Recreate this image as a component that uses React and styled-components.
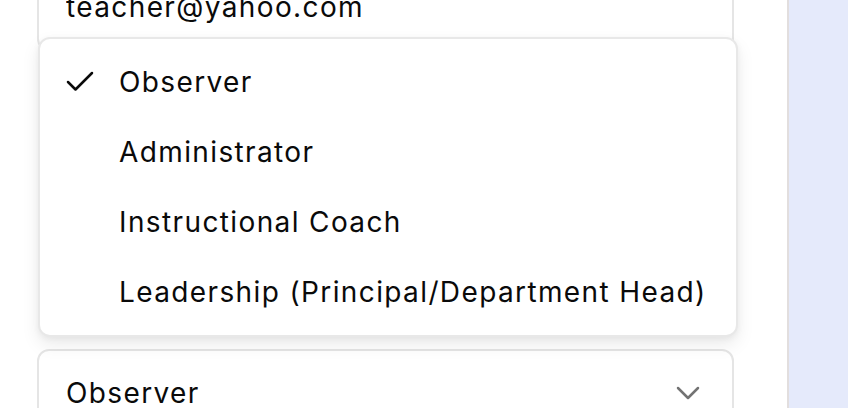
import styled, { createGlobalStyle } from "styled-components";
import { Check, ChevronDown } from "lucide-react";

const GlobalStyle = createGlobalStyle`
  html, body, #root {
    height: 100%;
  }
  body {
    margin: 0;
    overflow: hidden;
    background: #ffffff;
    font-family: Inter, "Noto Sans", sans-serif;
    letter-spacing: 1.38px;
    color: #0a0a0a;
  }
`;

const Page = styled.div`
  display: flex;
  height: 100%;
`;

const Main = styled.main`
  width: 787px;
  flex-shrink: 0;
  padding-left: 37px;
  box-sizing: border-box;
  background: #ffffff;
`;

const Aside = styled.aside`
  flex: 1;
  border-left: 2px solid #e2dede;
  background: #e5eafb;
`;

const Form = styled.form`
  width: 697px;
  display: flex;
  flex-direction: column;
  margin-top: -37px;
`;

const Field = styled.div`
  position: relative;
  margin-top: ${(p) => p.$offset || 0}px;
`;

const Input = styled.input`
  display: block;
  width: 100%;
  height: 88px;
  box-sizing: border-box;
  border: 2px solid #e5e5e5;
  border-radius: 12px;
  padding: 0 27px;
  font: inherit;
  font-size: 28px;
  letter-spacing: inherit;
  color: #0a0a0a;
  background: #ffffff;
  outline: none;
`;

const Trigger = styled.button`
  display: flex;
  align-items: center;
  justify-content: space-between;
  width: 100%;
  height: 88px;
  box-sizing: border-box;
  border: 2px solid #e5e5e5;
  border-radius: 12px;
  padding: 0 24px 0 27px;
  font: inherit;
  font-size: 28px;
  letter-spacing: inherit;
  color: #0a0a0a;
  background: #ffffff;
  text-align: left;

  svg {
    color: #737373;
  }
`;

const Menu = styled.div`
  position: absolute;
  left: 1px;
  right: -4px;
  bottom: calc(100% + 12px);
  box-sizing: border-box;
  padding: 8px 0;
  border: 2px solid #e8e8e8;
  border-radius: 12px;
  background: #ffffff;
  box-shadow: 0 8px 18px rgba(0, 0, 0, 0.08), 0 2px 6px rgba(0, 0, 0, 0.05);
`;

const Item = styled.div`
  display: flex;
  align-items: center;
  height: 70px;
  padding-left: 79px;
  position: relative;
  font-size: 28px;
  color: #0a0a0a;
  white-space: nowrap;
`;

const Tick = styled.span`
  position: absolute;
  left: 22px;
  top: 50%;
  transform: translateY(-50%);
  display: flex;
`;

const roles = [
  "Observer",
  "Administrator",
  "Instructional Coach",
  "Leadership (Principal/Department Head)",
];

export default function App() {
  const selected = "Observer";

  return (
    <Page>
      <GlobalStyle />
      <Main>
        <Form onSubmit={(e) => e.preventDefault()}>
          <Field>
            <Input type="email" defaultValue="teacher@yahoo.com" readOnly />
          </Field>
          <Field $offset={298}>
            <Trigger type="button">
              <span>{selected}</span>
              <ChevronDown size={40} strokeWidth={1.5} />
            </Trigger>
            <Menu role="listbox">
              {roles.map((role) => (
                <Item key={role} role="option">
                  {role === selected && (
                    <Tick>
                      <Check size={36} strokeWidth={1.7} />
                    </Tick>
                  )}
                  {role}
                </Item>
              ))}
            </Menu>
          </Field>
        </Form>
      </Main>
      <Aside />
    </Page>
  );
}
